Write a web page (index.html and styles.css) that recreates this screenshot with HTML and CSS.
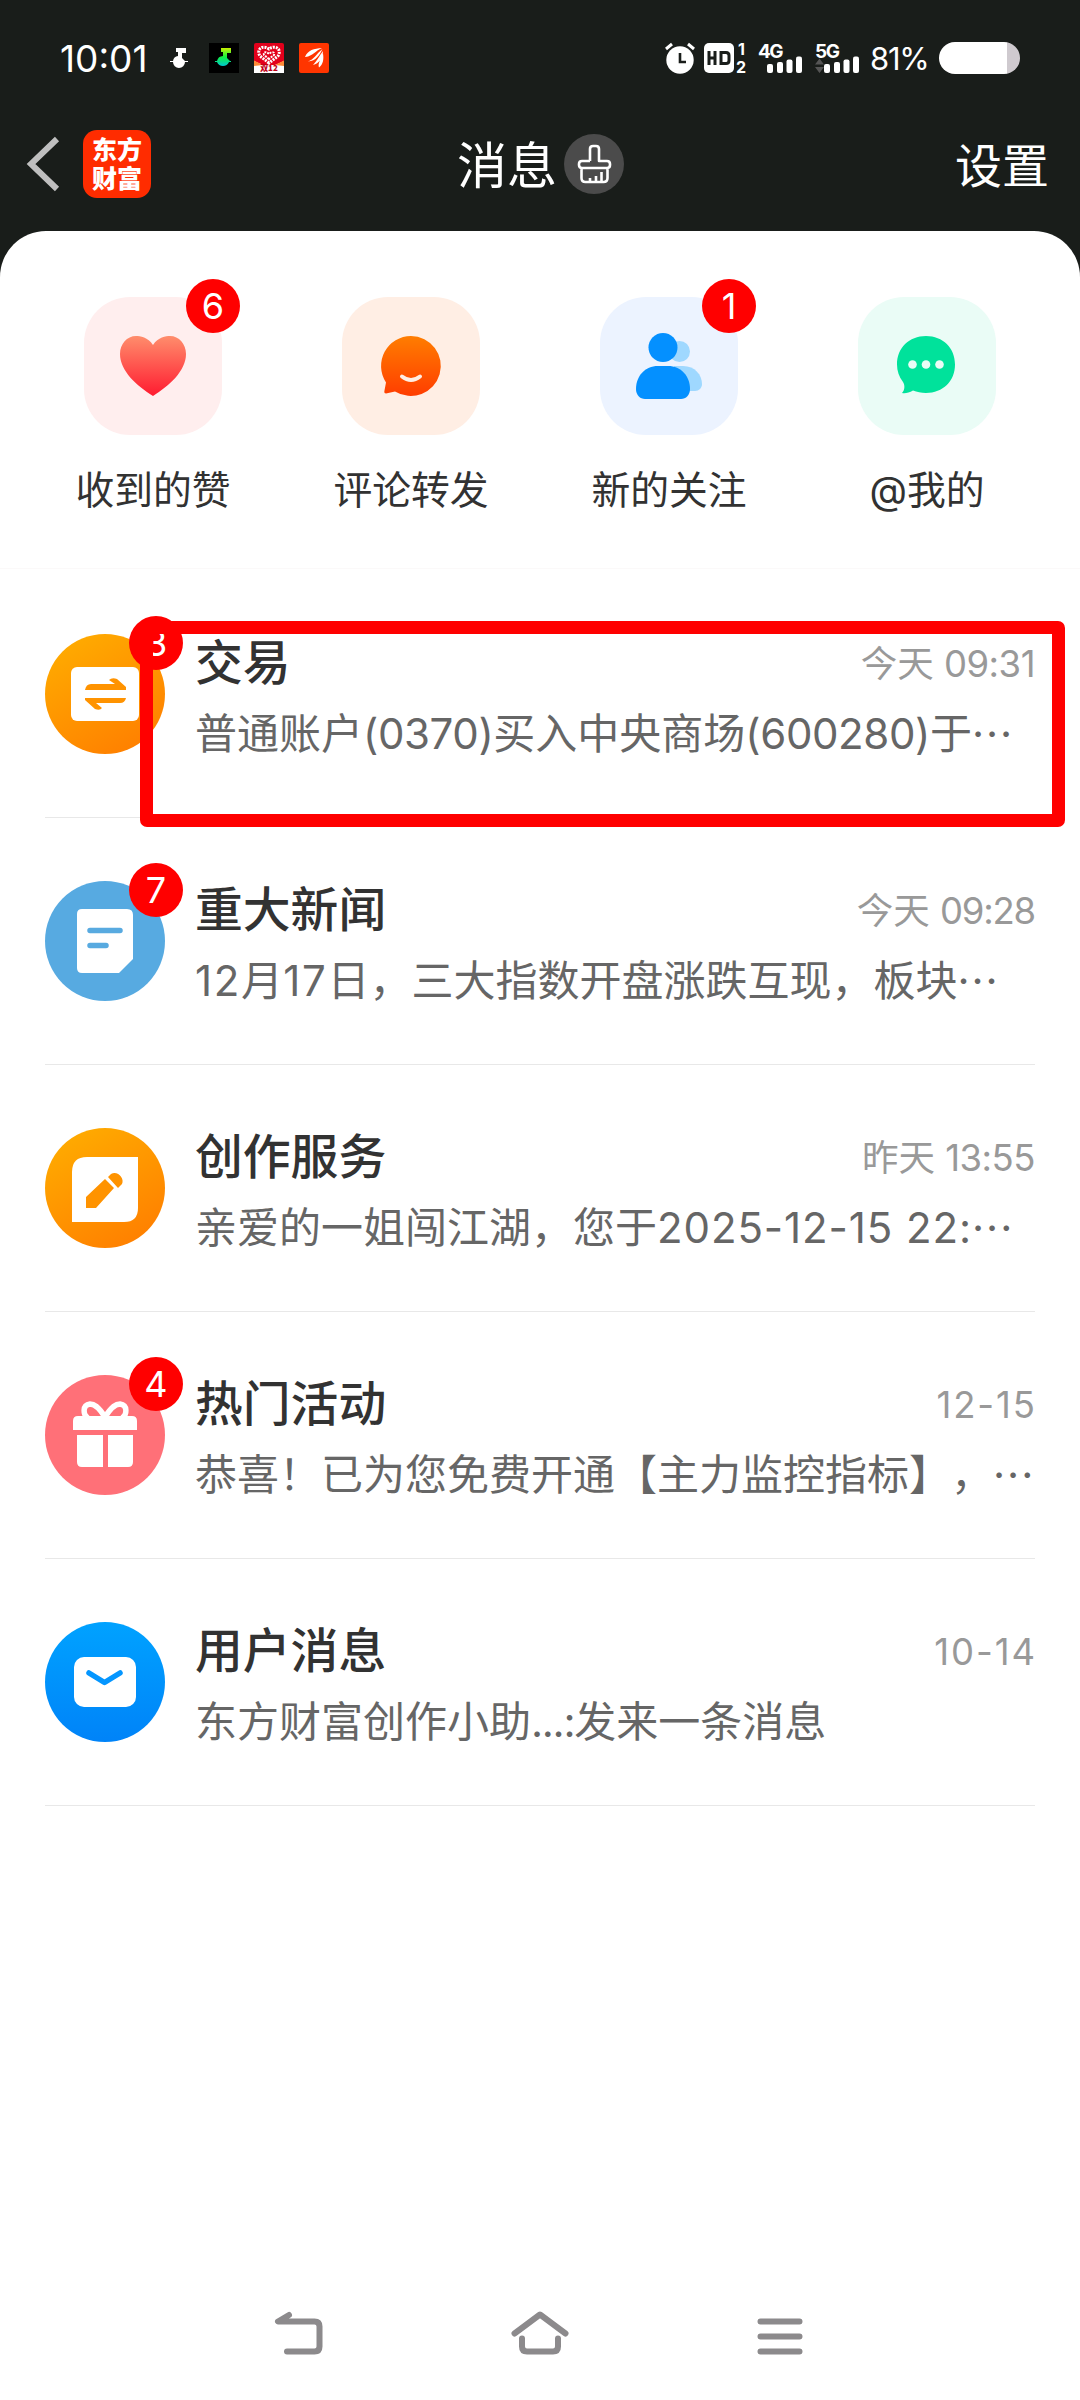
FILE: index.html
```html
<!DOCTYPE html>
<html lang="zh-CN">
<head>
<meta charset="utf-8">
<title>消息</title>
<link rel="stylesheet" href="styles.css">
</head>
<body>
<div class="screen">
  <div class="status">
    <div class="status-left">
      <span class="clock">10:01</span>
      <svg class="s-note" width="18" height="20" viewBox="0 0 18 20"><path d="M6 0h10v5h-4v5l3 3h3v1h-3a6 6 0 0 1-12 0H0v-1h3a6 6 0 0 1 5-5V4H6z" fill="#fff"/></svg>
      <svg class="s-app" width="30" height="30" viewBox="0 0 30 30"><defs><linearGradient id="gn" x1="0" y1="0" x2="0" y2="1"><stop offset="0" stop-color="#c8f000"/><stop offset=".5" stop-color="#10f040"/><stop offset="1" stop-color="#00c8d0"/></linearGradient></defs><path d="M0 0h30v30H0z"/><path d="M12 5h10v5h-4v5l3 3h1v1h-2a6.500 6.500 0 0 1-12 0H6v-1h2a6.500 6.500 0 0 1 6-5V9h-2z" fill="url(#gn)"/></svg>
      <svg class="s-app" width="30" height="30" viewBox="0 0 30 30"><rect width="30" height="30" rx="2" fill="#e3001b"/><path d="M0 18l9 4h12l9-4v12H0z" fill="#fff"/><path d="M0 17.500l9 4.500-9 1zM30 17.500L21 22l9 1z" fill="#ff8a35"/><path d="M15 20L6 13C2 7 8 1 15 6c7-5 13 1 9 7z" fill="none" stroke="#fff" stroke-width="3" stroke-dasharray="2 1"/><path d="M15 16l-5-4c-1-3 2-4 5-1 3-3 6-2 5 1z" fill="none" stroke="#fff" stroke-width="2" stroke-dasharray="2 1"/><text x="15" y="28" class="tiny">双12</text></svg>
      <svg class="s-app" width="30" height="30" viewBox="0 0 30 30"><rect width="30" height="30" rx="2" fill="#ff3500"/><path d="M6 14C9 7 15 5.500 23 5c-7 3-9 8-16.500 9zM9 18.500c6-2 8-7.500 14.500-12.500-3 6-6.500 12-14.500 12.500zM14 22c4-4 6-9 10-14 0 6-4 13-10 14zM20 24.500c-1.500-4 2-9 4-14 1 6 0 11-4 14z" fill="#fff"/></svg>
    </div>
    <div class="status-right">
      <svg width="30" height="32" viewBox="0 0 30 32"><circle cx="15" cy="18" r="13.700" fill="#fff"/><path d="M1 7l6-5M29 7l-6-5" stroke="#fff" stroke-width="3"/><path d="M15 11v9h6" fill="none" stroke="#191d1a" stroke-width="2.600"/></svg>
      <svg class="hd" width="43" height="30" viewBox="0 0 43 30"><rect width="30" height="30" rx="5" fill="#fff"/><path d="M5 8v14M11 8v14M5 15h6M17 9.500h5q3 0 3 3v5q0 3-3 3h-5z" fill="none" stroke="#191d1a" stroke-width="3"/><text x="37.500" y="12" class="sim">1</text><text x="37" y="29.500" class="sim">2</text></svg>
      <svg class="sig4" width="45" height="30" viewBox="0 0 45 30"><text x="0" y="14.500" class="net">4G</text><g fill="#fff"><rect x="9" y="21" width="6" height="9" rx="2"/><rect x="19" y="19" width="6" height="11" rx="2"/><rect x="28.500" y="16.500" width="6" height="13.500" rx="2"/><rect x="38" y="13.500" width="6" height="16.500" rx="2"/></g></svg>
      <svg class="sig5" width="45" height="30" viewBox="0 0 45 30"><text x="0" y="14.500" class="net">5G</text><path d="M0 21.500l4.500-6 4.500 6zM0 24h9l-4.500 6z" fill="#555"/><g fill="#fff"><rect x="9" y="21" width="6" height="9" rx="2"/><rect x="19" y="19" width="6" height="11" rx="2"/><rect x="28.500" y="16.500" width="6" height="13.500" rx="2"/><rect x="38" y="13.500" width="6" height="16.500" rx="2"/></g></svg>
      <span class="pct">81%</span>
      <span class="battery"></span>
    </div>
  </div>
  <header class="nav">
    <div class="nav-left">
      <svg width="34" height="56" viewBox="0 0 34 56"><path d="M30 3L4 28l26 25" fill="none" stroke="#bfbfbf" stroke-width="6"/></svg>
      <div class="logo">东方<br>财富</div>
    </div>
    <div class="nav-title"><h1>消息</h1>
      <svg width="60" height="60" viewBox="0 0 60 60"><circle cx="30" cy="30" r="30" fill="#4b4b4b"/><path d="M26 27V15q0-3 3-3h3q3 0 3 3v12h8q3 0 3 3v1q0 3-3 3H18q-3 0-3-3v-1q0-3 3-3h8M17.500 34v10q0 4 4 4h18q4 0 4-4V34M26 48v-4M32 48v-6M37.500 48V38" fill="none" stroke="#fff" stroke-width="2.600" stroke-linejoin="round"/></svg>
    </div>
    <div class="nav-right">设置</div>
  </header>
  <main class="panel">
    <section class="quick">
      <div class="quick-item"><div class="tile pink"><svg width="66" height="60" viewBox="0 0 66 60"><defs><linearGradient id="gh" x1="0" y1="0" x2="0" y2="1"><stop offset="0" stop-color="#ff8d6c"/><stop offset="1" stop-color="#ff1b30"/></linearGradient></defs><path d="M33 9C28 1 20 0 16 0 7 0 0 8 0 18c0 17 17 32 33 42 16-10 33-25 33-42C66 8 59 0 50 0c-4 0-12 1-17 9z" fill="url(#gh)"/></svg><b class="badge">6</b></div><span>收到的赞</span></div>
      <div class="quick-item"><div class="tile peach"><svg width="60" height="60" viewBox="0 0 60 60"><defs><linearGradient id="go" x1="0" y1="0" x2="0" y2="1"><stop offset="0" stop-color="#ff7d00"/><stop offset="1" stop-color="#ff3d00"/></linearGradient></defs><path d="M30 0a30 30 0 1 1-16 55.500l-9 2q-2 0-1.700-2L5 46.500A30 30 0 0 1 30 0z" fill="url(#go)"/><path d="M21 40.500q9 7 18 0" fill="none" stroke="#ffeee4" stroke-width="4" stroke-linecap="round"/></svg></div><span>评论转发</span></div>
      <div class="quick-item"><div class="tile blue"><svg width="66" height="66" viewBox="0 0 66 66"><g fill="#9fd8ff"><circle cx="43.500" cy="18.500" r="10.500"/><path d="M38 33h9c12 0 19 9 19 18 0 4-3 7-7 7H38z"/></g><g fill="#0490ff"><circle cx="27" cy="14.500" r="14.500"/><path d="M22 33h10c13 0 22 10 22 23 0 6-4 10-9 10H9c-5 0-9-4-9-10 0-13 9-23 22-23z"/></g></svg><b class="badge">1</b></div><span>新的关注</span></div>
      <div class="quick-item"><div class="tile mint"><svg width="62" height="60" viewBox="0 0 62 60"><path d="M30 0c17 0 29 12 29 28.500S47 57 30 57c-5 0-9-1-13-2.500-4 2.500-8 3-11 2.500 3-3 3-8 1-11C3 41 1 35 1 28.500 1 12 13 0 30 0z" fill="#00e29b"/><g fill="#eafcf6"><circle cx="16.500" cy="28.500" r="4.300"/><circle cx="30" cy="28.500" r="4.300"/><circle cx="43.500" cy="28.500" r="4.300"/></g></svg></div><span>@我的</span></div>
    </section>
    <section class="list">
      <article class="row boxed">
        <div class="avatar orange"><svg width="120" height="120" viewBox="0 0 120 120"><rect x="26" y="33" width="68" height="54" rx="6" fill="#fff"/><path d="M40 56q1-6 6-6h24l-6-4q3-3 8-1l9 8v3zM81 64q-1 5-6 5H51l6 5q-2 3-7 1L40 66v-2z" fill="#ff9300"/></svg><b class="badge">3</b></div>
        <div class="body"><div class="line"><h2>交易</h2><time>今天 <i>09:31</i></time></div><p>普通账户<i class="paren">(0370)</i>买入中央商场<i class="paren">(600280)</i>于<i class="dots">···</i></p></div>
        <div class="marker"></div>
      </article>
      <article class="row">
        <div class="avatar sky"><svg width="120" height="120" viewBox="0 0 120 120"><path d="M37 28h45q6 0 6 6v44L74 92H37q-5 0-5-5V33q0-5 5-5z" fill="#fff"/><path d="M45 49.500h30M45 64.500h16" stroke="#58aae0" stroke-width="5.500" stroke-linecap="round"/></svg><b class="badge">7</b></div>
        <div class="body"><div class="line"><h2>重大新闻</h2><time>今天 <i class="tight">09:28</i></time></div><p><i class="day">12</i>月<i class="day">17</i>日，三大指数开盘涨跌互现，板块<i class="dots">···</i></p></div>
      </article>
      <article class="row">
        <div class="avatar orange"><svg width="120" height="120" viewBox="0 0 120 120"><path d="M42 29h51v51q0 14-14 14H27V44q0-15 15-15z" fill="#fff"/><path d="M41 69l19-18 9 9-18 20H41zM63 49l3-3c6-4 14 4 11 10l-4 4z" fill="#ff9300"/></svg></div>
        <div class="body"><div class="line"><h2>创作服务</h2><time>昨天 <i>13:55</i></time></div><p>亲爱的一姐闯江湖，您于<i class="wide">2025-12-15 22:</i><i class="dots">···</i></p></div>
      </article>
      <article class="row">
        <div class="avatar coral"><svg width="120" height="120" viewBox="0 0 120 120"><path d="M60 42C53 31 49 29 45 29c-8 1-7 11-2 14M60 42c7-11 11-13 15-13 8 1 7 11 2 14" fill="none" stroke="#fff" stroke-width="5.500"/><path d="M33 41h54q5 0 5 5v9H28v-9q0-5 5-5zM32 60h26v32H37q-5 0-5-5zM63 60h25v27q0 5-5 5H63z" fill="#fff"/></svg><b class="badge">4</b></div>
        <div class="body"><div class="line"><h2>热门活动</h2><time><i class="date">12-15</i></time></div><p>恭喜！已为您免费开通【主力监控指标】，<i class="dots">···</i></p></div>
      </article>
      <article class="row">
        <div class="avatar azure"><svg width="120" height="120" viewBox="0 0 120 120"><rect x="29" y="35" width="62" height="50" rx="10" fill="#fff"/><path d="M44 51l15.500 9.500L75 51" fill="none" stroke="#0496ff" stroke-width="5.500" stroke-linecap="round" stroke-linejoin="round"/></svg></div>
        <div class="body"><div class="line"><h2>用户消息</h2><time><i class="date">10-14</i></time></div><p>东方财富创作小助<i class="colon">...:</i>发来一条消息</p></div>
      </article>
    </section>
    <footer class="system">
      <svg width="50" height="50" viewBox="0 0 50 50"><path d="M14 6L3 12.500h36.500q5 0 5 5v20q0 5-5 5H12" fill="none" stroke="#8c8a8c" stroke-width="6" stroke-linecap="round" stroke-linejoin="round"/></svg>
      <svg width="58" height="50" viewBox="0 0 58 50"><path d="M3.500 24.500L29 5.500l25.500 19M11 29.500v8q0 5 5 5h26q5 0 5-5v-8" fill="none" stroke="#8c8a8c" stroke-width="6" stroke-linecap="round" stroke-linejoin="round"/></svg>
      <svg width="50" height="50" viewBox="0 0 50 50"><path d="M5.500 12.500h39M5.500 27.500h39M5.500 42.500h39" stroke="#8c8a8c" stroke-width="6" stroke-linecap="round"/></svg>
    </footer>
  </main>
</div>
</body>
</html>
```
FILE: styles.css
```css
* { box-sizing: border-box; margin: 0; padding: 0; }
body { font-family: Inter, "Noto Sans CJK SC", sans-serif; background: #191d1a; text-spacing-trim: space-all; }
i { font-style: normal; }
svg { display: block; flex: none; overflow: visible; }
.screen { width: 1080px; height: 2400px; display: flex; flex-direction: column; background: #191d1a; overflow: hidden; }

.status { height: 116px; padding: 0 60px; display: flex; justify-content: space-between; align-items: center; color: #fff; }
.status-left { display: flex; align-items: center; }
.clock { width: 86px; font-size: 37px; line-height: 46px; white-space: nowrap; padding-top: 1px; }
.s-note { margin: 0 21px 0 24px; }
.s-app { margin-right: 15px; }
.status-right { display: flex; align-items: center; }
.hd { margin-left: 9px; }
.sig4 { margin-left: 11px; }
.sig5 { margin-left: 12px; }
.pct { width: 60px; margin-left: 10px; padding-top: 2px; font-size: 31px; line-height: 38px; white-space: nowrap; letter-spacing: -1.300px; }
.battery { width: 81px; height: 32px; margin-left: 9px; border-radius: 16px; background: linear-gradient(90deg, #fff 68px, #cfcacf 68px); }
.tiny { font: 800 8px "Noto Sans CJK SC", sans-serif; fill: #c00018; text-anchor: middle; }
.sim { font: 700 16px Inter, sans-serif; fill: #fff; text-anchor: middle; }
.net { font: 700 19px Inter, sans-serif; fill: #fff; letter-spacing: -1.500px; }

.nav { height: 115px; padding: 0 31px 20px 27px; display: grid; grid-template-columns: 1fr auto 1fr; align-items: center; color: #fff; }
.nav-left { display: flex; align-items: center; gap: 22px; }
.logo { width: 68px; height: 68px; padding-top: 4px; border-radius: 14px; background: #ff2c00; text-align: center; font: 900 25px/29px "Noto Sans CJK SC", sans-serif; }
.nav-title { display: flex; align-items: center; gap: 7px; padding-left: 5px; }
h1 { font-size: 50px; line-height: 60px; font-weight: 400; padding-top: 4px; }
.nav-right { text-align: right; font-size: 47px; line-height: 60px; padding-top: 4px; }

.panel { flex: 1; background: #fff; border-radius: 46px 46px 0 0; display: flex; flex-direction: column; }
.quick { height: 338px; padding: 66px 24px 0; display: grid; grid-template-columns: repeat(4, 258px); border-bottom: 1px solid #fbf9f9; }
.quick-item { display: flex; flex-direction: column; align-items: center; gap: 26px; font-size: 38.800px; line-height: 58px; color: #323232; }
.tile { position: relative; width: 138px; height: 138px; border-radius: 46px; display: flex; align-items: center; justify-content: center; }
.pink { background: #ffeeee; }
.peach { background: #ffeee4; }
.blue { background: #ecf3ff; }
.mint { background: #eafcf6; }
.badge { position: absolute; top: -18px; right: -18px; width: 54px; height: 54px; border-radius: 50%; background: #f00; color: #fff; font-size: 36px; font-weight: 400; line-height: 55px; text-align: center; }

.list { padding: 2px 45px 0; }
.row { position: relative; height: 247px; padding-top: 63px; display: flex; gap: 30px; border-bottom: 1px solid #e8e8e8; }
.avatar { position: relative; flex: none; width: 120px; height: 120px; border-radius: 50%; }
.orange { background: linear-gradient(150deg, #ffb000, #ff7a00); }
.sky { background: #57aae1; }
.coral { background: #ff7078; }
.azure { background: linear-gradient(#00a2ff, #0083f8); }
.body { flex: 1; min-width: 0; padding-top: 1px; color: #666; }
.line { display: flex; justify-content: space-between; align-items: center; height: 56px; }
h2 { font-size: 47.800px; line-height: 56px; font-weight: 500; color: #323232; }
time { padding-top: 2px; font-size: 36.500px; line-height: 56px; color: #999; white-space: nowrap; }
time i { letter-spacing: -0.500px; }
p { margin-top: 13px; font-size: 42px; line-height: 60px; white-space: nowrap; }
.paren { letter-spacing: -0.400px; }
.wide { letter-spacing: 0.900px; }
.day { letter-spacing: 1.700px; }
.colon { letter-spacing: -1.300px; }
time .tight { letter-spacing: -1.200px; }
time .date { letter-spacing: 1.900px; margin-right: -1.900px; }
.dots { letter-spacing: 2px; }
.marker { position: absolute; left: 95px; top: 50px; width: 925px; height: 206px; border: 13px solid #f00; border-radius: 7px; z-index: 2; }

.system { margin-top: auto; height: 91px; padding: 0 275px; display: flex; justify-content: space-between; }
```
